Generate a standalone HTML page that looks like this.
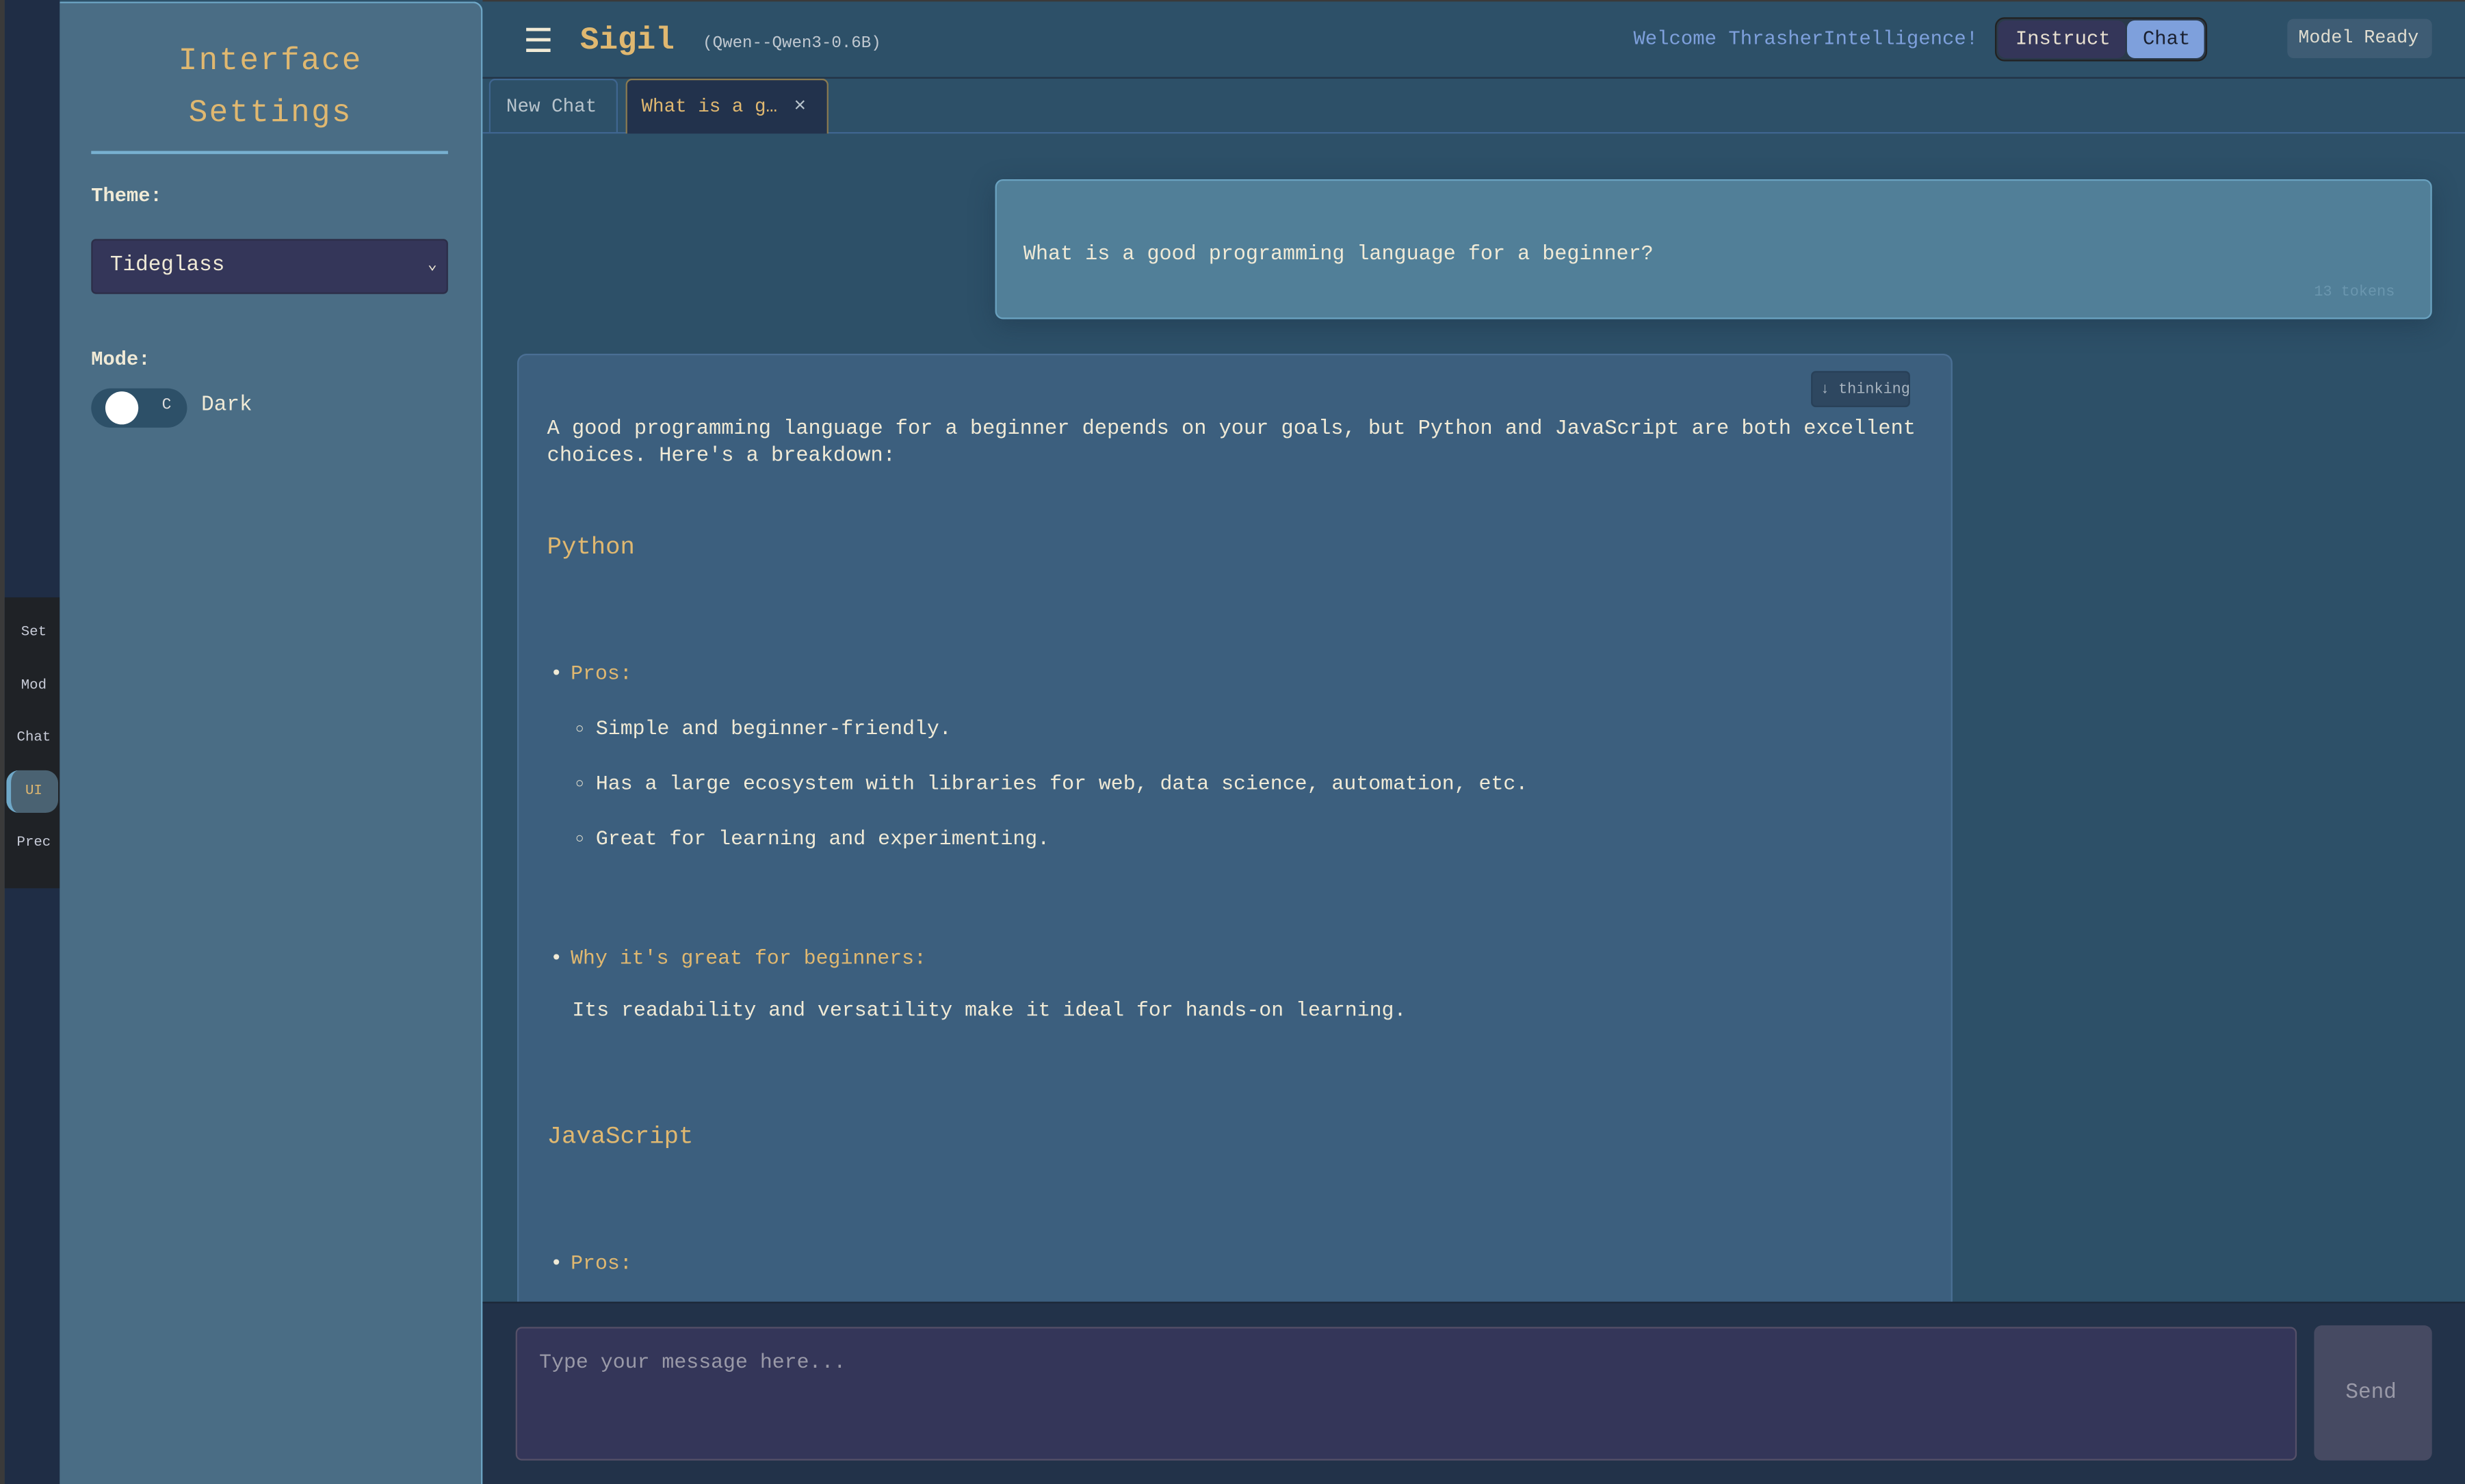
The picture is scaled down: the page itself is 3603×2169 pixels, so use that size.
<!DOCTYPE html>
<html><head><meta charset="utf-8"><style>
html,body{margin:0;padding:0;width:3603px;height:2169px;overflow:hidden;background:#2d5068}
#w{position:absolute;left:0;top:0;width:1568px;height:944px;transform:scale(2.29783);transform-origin:0 0;font-family:"Liberation Mono",monospace;color:#f0ead6;overflow:hidden;background:#2d5068}
.a{position:absolute;white-space:nowrap}
.g{color:#e0b870}
</style></head><body><div id="w">
<div class="a" style="left:0;top:0;width:3px;height:944px;background:#3a3a3a"></div>
<div class="a" style="left:3px;top:0;width:35px;height:944px;background:#1f2d45"></div>
<div class="a" style="left:3px;top:380px;width:35px;height:185px;background:#1f2226"></div>
<div class="a" style="left:4px;top:490px;width:33px;height:27px;background:#4a6272;border-radius:8px;border-left:3px solid #6fa8c8;box-sizing:border-box"></div>
<div class="a" style="left:4px;width:35px;text-align:center;font-size:9px;color:#c8ccd8;top:397px">Set</div>
<div class="a" style="left:4px;width:35px;text-align:center;font-size:9px;color:#c8ccd8;top:431px">Mod</div>
<div class="a" style="left:4px;width:35px;text-align:center;font-size:9px;color:#c8ccd8;top:464px">Chat</div>
<div class="a g" style="left:4px;width:35px;text-align:center;font-size:9px;top:498px">UI</div>
<div class="a" style="left:4px;width:35px;text-align:center;font-size:9px;color:#c8ccd8;top:531px">Prec</div>

<div class="a" style="left:38px;top:1px;width:268px;height:942px;background:#4a6d85;border-right:1px solid #6fa8c8;border-top:1px solid #6fa8c8;border-top-right-radius:6px"></div>
<div class="a g" style="left:38px;width:268px;text-align:center;font-size:20px;top:23px;line-height:33px;white-space:normal;letter-spacing:1px">Interface<br>Settings</div>
<div class="a" style="left:58px;top:96px;width:227px;height:1.5px;background:#78b0d0"></div>
<div class="a" style="left:58px;top:118px;font-size:12.5px;font-weight:bold">Theme:</div>
<div class="a" style="left:58px;top:152px;width:227px;height:35px;background:#343659;border:1px solid #2c2e48;box-sizing:border-box;border-radius:3px"></div>
<div class="a" style="left:70px;top:162px;font-size:13.5px">Tideglass</div>
<div class="a" style="left:272px;top:163px;font-size:10px">&#8964;</div>
<div class="a" style="left:58px;top:222px;font-size:12.5px;font-weight:bold">Mode:</div>
<div class="a" style="left:58px;top:247px;width:61px;height:25px;border-radius:13px;background:#2d5068"></div>
<div class="a" style="left:67px;top:249px;width:21px;height:21px;border-radius:50%;background:#fff"></div>
<div class="a" style="left:103px;top:253px;font-size:10px;color:#ddd">C</div>
<div class="a" style="left:128px;top:251px;font-size:13.5px">Dark</div>

<div class="a" style="left:307px;top:0;width:1261px;height:48px;background:#2d5068;border-bottom:1px solid #233445;border-top:1px solid #3a3a3a"></div>
<div class="a" style="left:333px;top:14px;font-size:21px;color:#f0ead6">&#9776;</div>
<div class="a g" style="left:369px;top:15px;font-size:20px;font-weight:bold">Sigil</div>
<div class="a" style="left:447px;top:22px;font-size:10.5px;color:#c0c8d0">(Qwen--Qwen3-0.6B)</div>
<div class="a" style="left:1039px;top:18px;font-size:12.6px;color:#7ea0dc">Welcome ThrasherIntelligence!</div>
<div class="a" style="left:1269px;top:11px;width:135px;height:28px;border-radius:6px;background:#2a3a4a;border:1px solid #222;box-sizing:border-box"></div>
<div class="a" style="left:1271px;top:13px;width:81px;height:24px;border-radius:5px;background:#343659"></div>
<div class="a" style="left:1353px;top:13px;width:49px;height:24px;border-radius:5px;background:#7ea0dc"></div>
<div class="a" style="left:1282px;top:18px;font-size:12.6px;color:#e8e0d0">Instruct</div>
<div class="a" style="left:1363px;top:18px;font-size:12.6px;color:#1a2030">Chat</div>
<div class="a" style="left:1455px;top:12px;width:92px;height:25px;border-radius:4px;background:#3e5c74"></div>
<div class="a" style="left:1462px;top:18px;font-size:11.6px;color:#e0ddd0">Model Ready</div>

<div class="a" style="left:307px;top:84px;width:1261px;height:1px;background:#3f6690"></div>
<div class="a" style="left:311px;top:50px;width:82px;height:34px;background:#2d5068;border:1px solid #3f6690;border-bottom:none;box-sizing:border-box;border-radius:4px 4px 0 0"></div>
<div class="a" style="left:322px;top:61px;font-size:12px;color:#b8c4cc">New Chat</div>
<div class="a" style="left:398px;top:50px;width:129px;height:35px;background:#22324c;border:1px solid #8a7a50;border-bottom:none;box-sizing:border-box;border-radius:4px 4px 0 0"></div>
<div class="a g" style="left:408px;top:61px;font-size:12px">What is a g…</div>
<div class="a" style="left:505px;top:60px;font-size:13px;color:#b8c4cc">×</div>

<div class="a" style="left:633px;top:114px;width:914px;height:89px;background:#517f98;border:1px solid #6aa2c0;box-sizing:border-box;border-radius:5px;box-shadow:0 4px 16px rgba(20,40,60,.35)"></div>
<div class="a" style="left:651px;top:154px;font-size:13.1px">What is a good programming language for a beginner?</div>
<div class="a" style="left:1472px;top:180px;font-size:9.5px;color:#6a96ae">13 tokens</div>

<div class="a" style="left:329px;top:225px;width:913px;height:640px;background:#3c5f7e;border:1px solid #4a6f94;box-sizing:border-box;border-radius:6px"></div>
<div class="a" style="left:1152px;top:236px;width:63px;height:23px;background:#2e4760;border:1px solid #284058;box-sizing:border-box;border-radius:3px"></div>
<div class="a" style="left:1158px;top:242px;font-size:9.5px;color:#a8b4c0">↓ thinking</div>
<div class="a" style="left:348px;top:264px;font-size:13.2px;line-height:17px">A good programming language for a beginner depends on your goals, but Python and JavaScript are both excellent<br>choices. Here's a breakdown:</div>
<div class="a g" style="left:348px;top:339px;font-size:15.5px">Python</div>
<div class="a" style="left:350px;top:421px;font-size:13px">•</div>
<div class="a g" style="left:363px;top:421px;font-size:13px">Pros:</div>
<div class="a" style="left:366px;top:459px;font-size:9px">○</div>
<div class="a" style="left:379px;top:456px;font-size:13px">Simple and beginner-friendly.</div>
<div class="a" style="left:366px;top:494px;font-size:9px">○</div>
<div class="a" style="left:379px;top:491px;font-size:13px">Has a large ecosystem with libraries for web, data science, automation, etc.</div>
<div class="a" style="left:366px;top:529px;font-size:9px">○</div>
<div class="a" style="left:379px;top:526px;font-size:13px">Great for learning and experimenting.</div>
<div class="a" style="left:350px;top:602px;font-size:13px">•</div>
<div class="a g" style="left:363px;top:602px;font-size:13px">Why it's great for beginners:</div>
<div class="a" style="left:364px;top:635px;font-size:13px">Its readability and versatility make it ideal for hands-on learning.</div>
<div class="a g" style="left:348px;top:714px;font-size:15.5px">JavaScript</div>
<div class="a" style="left:350px;top:796px;font-size:13px">•</div>
<div class="a g" style="left:363px;top:796px;font-size:13px">Pros:</div>

<div class="a" style="left:307px;top:828px;width:1261px;height:116px;background:#223249;border-top:1px solid #1c2838"></div>
<div class="a" style="left:328px;top:844px;width:1133px;height:85px;background:#343659;border:1px solid #555068;box-sizing:border-box;border-radius:4px"></div>
<div class="a" style="left:343px;top:859px;font-size:13px;color:#9a9aa8">Type your message here...</div>
<div class="a" style="left:1472px;top:843px;width:75px;height:86px;background:#464a62;border-radius:5px"></div>
<div class="a" style="left:1492px;top:879px;font-size:13.5px;color:#9a9aa8">Send</div>
</div></body></html>
